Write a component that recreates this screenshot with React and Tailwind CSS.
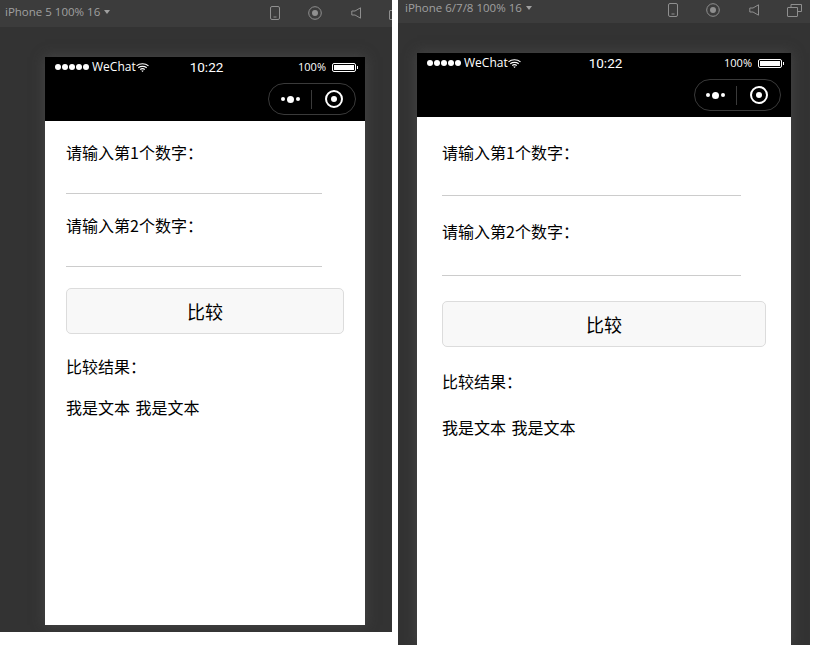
const cjk = "font-['Noto_Sans_CJK_SC','Noto_Sans',sans-serif]";

function PhoneIcon() {
  return (
    <svg width="10" height="14" viewBox="0 0 10 14" fill="none" stroke="#8f8f8f">
      <rect x="0.5" y="0.5" width="9" height="13" rx="1.5" />
      <path d="M3.5 11h3" />
    </svg>
  );
}

function RecordIcon() {
  return (
    <svg width="14" height="14" viewBox="0 0 14 14" fill="none">
      <circle cx="7" cy="7" r="6.3" stroke="#8f8f8f" />
      <circle cx="7" cy="7" r="3" fill="#8f8f8f" />
    </svg>
  );
}

function SoundIcon() {
  return (
    <svg width="10" height="12" viewBox="0 0 10 12" fill="none" stroke="#8f8f8f">
      <path d="M9.5 0.8v10.4L4 8H0.8V4H4z" />
    </svg>
  );
}

function WindowIcon() {
  return (
    <svg width="15" height="13" viewBox="0 0 15 13" fill="none" stroke="#8f8f8f">
      <path d="M4 3.500V0.500h10.500v7h-3.500" />
      <path d="M10.500 3.500v8.500a0.500 0.500 0 0 1-0.500 0.500H1a0.500 0.500 0 0 1-0.500-0.500V4a0.500 0.500 0 0 1 0.500-0.500z" />
    </svg>
  );
}

function Wifi() {
  return (
    <svg width="13" height="9" viewBox="0 0 13 9" fill="none" stroke="#fff" strokeWidth="1.1">
      <path d="M0.500 2.800C3.800 0 9.200 0 12.500 2.800" />
      <path d="M2.300 4.700C4.600 2.900 8.400 2.900 10.700 4.700" />
      <path d="M4.200 6.500C5.500 5.500 7.500 5.500 8.800 6.500" />
      <path d="M6.500 9L5.300 7.800C6 7.300 7 7.300 7.700 7.800z" fill="#fff" stroke="none" />
    </svg>
  );
}

function Battery() {
  return (
    <div className="flex items-center">
      <div className="w-[24px] h-[9px] rounded-[2px] border border-white p-px">
        <div className="h-full bg-white" />
      </div>
      <div className="w-px h-[3px] bg-white ml-px" />
    </div>
  );
}

function Capsule({ w }) {
  return (
    <div className={`${w} h-[32px] rounded-full border border-[#3a3a3a] flex items-center`}>
      <div className="flex-1 flex items-center justify-center gap-[2px]">
        <div className="w-[4px] h-[4px] rounded-full bg-white" />
        <div className="w-[7px] h-[7px] rounded-full bg-white" />
        <div className="w-[4px] h-[4px] rounded-full bg-white" />
      </div>
      <div className="w-px h-[19px] bg-[#3a3a3a]" />
      <div className="w-[43px] flex items-center justify-center">
        <div className="w-[18px] h-[18px] rounded-full border-[2.5px] border-white flex items-center justify-center">
          <div className="w-[6px] h-[6px] rounded-full bg-white" />
        </div>
      </div>
    </div>
  );
}

function Header({ title, wide }) {
  return (
    <div className={`bg-[#3c3c3c] flex items-start text-[11.5px] leading-[16px] text-[#a0a0a0] font-['Open_Sans',sans-serif] shrink-0 ${wide ? "h-[23px] pl-[7px] pr-[8px]" : "h-[27px] pl-[5px] pt-[4px]"}`}>
      <span className="flex items-center gap-[4px]">
        {title}
        <span className="w-0 h-0 border-x-[3px] border-x-transparent border-t-[4px] border-t-[#a0a0a0]" />
      </span>
      <div className={`flex items-center ml-auto gap-[28px] ${wide ? "mt-[3px]" : "mt-[2px] mr-[-12px]"}`}>
        <PhoneIcon />
        <RecordIcon />
        <span className="ml-px flex"><SoundIcon /></span>
        <WindowIcon />
      </div>
    </div>
  );
}

function StatusBar() {
  return (
    <div className="flex items-center h-[20px] text-white text-[12px] font-['Open_Sans',sans-serif]">
      <div className="flex items-center flex-1 pl-[10px]">
        <div className="flex gap-px mr-[3px]">
          {[0, 1, 2, 3, 4].map((i) => (
            <div key={i} className="w-[6px] h-[6px] rounded-full bg-white" />
          ))}
        </div>
        <span>WeChat</span>
        <Wifi />
      </div>
      <span className="text-[13.5px] font-['Roboto',sans-serif]">10:22</span>
      <div className="flex items-center flex-1 justify-end gap-[6px] pr-[7px]">
        <span className="text-[11px]">100%</span>
        <Battery />
      </div>
    </div>
  );
}

export default function App() {
  return (
    <div className={`w-[819px] h-[654px] bg-white flex items-start overflow-hidden text-black ${cjk}`}>
      {/* iPhone 5 */}
      <div className="w-[392px] h-[632px] bg-[#333333] flex flex-col shrink-0 overflow-hidden">
        <Header title="iPhone 5 100% 16" />
        <div className="flex-1 px-[45px] pt-[30px] pb-[7px]">
          <div className="w-[320px] h-full bg-white flex flex-col shadow-[0_0_12px_rgba(80,80,80,0.7)]">
            <div className="h-[64px] bg-black shrink-0 flex flex-col">
              <StatusBar />
              <div className="flex justify-end pr-[9px] pt-[6px]">
                <Capsule w="w-[88px]" />
              </div>
            </div>
            <div className="px-[21px] pt-[19px] text-[16px]">
              <div className="leading-[24px]">请输入第1个数字：</div>
              <div className="h-[30px] w-[256px] border-b border-[#cccccc]" />
              <div className="mt-[19px] leading-[24px]">请输入第2个数字：</div>
              <div className="h-[30px] w-[256px] border-b border-[#cccccc]" />
              <button className="mt-[21px] w-[278px] h-[46px] rounded-[5px] border border-[#dcdcdc] bg-[#f8f8f8] text-[18px]">比较</button>
              <div className="mt-[20px] leading-[24px]">比较结果：</div>
              <div className="mt-[17px] leading-[24px] [word-spacing:2px]">我是文本 我是文本</div>
            </div>
          </div>
        </div>
      </div>

      {/* iPhone 6/7/8 */}
      <div className="ml-[6px] w-[412px] h-[645px] bg-[#333333] flex flex-col shrink-0 overflow-hidden">
        <Header title="iPhone 6/7/8 100% 16" wide />
        <div className="flex-1 pl-[19px] pt-[30px]">
          <div className="w-[374px] h-full bg-white flex flex-col shadow-[0_0_12px_rgba(80,80,80,0.7)]">
            <div className="h-[64px] bg-black shrink-0 flex flex-col">
              <StatusBar />
              <div className="flex justify-end pr-[10px] pt-[6px]">
                <Capsule w="w-[87px]" />
              </div>
            </div>
            <div className="px-[25px] pt-[23px] text-[16px]">
              <div className="leading-[24px]">请输入第1个数字：</div>
              <div className="h-[32px] w-[299px] border-b border-[#cccccc]" />
              <div className="mt-[23px] leading-[24px]">请输入第2个数字：</div>
              <div className="h-[33px] w-[299px] border-b border-[#cccccc]" />
              <button className="mt-[25px] w-[324px] h-[46px] rounded-[5px] border border-[#dcdcdc] bg-[#f8f8f8] text-[18px]">比较</button>
              <div className="mt-[22px] leading-[24px]">比较结果：</div>
              <div className="mt-[22px] leading-[24px] [word-spacing:2px]">我是文本 我是文本</div>
            </div>
          </div>
        </div>
      </div>
    </div>
  );
}
